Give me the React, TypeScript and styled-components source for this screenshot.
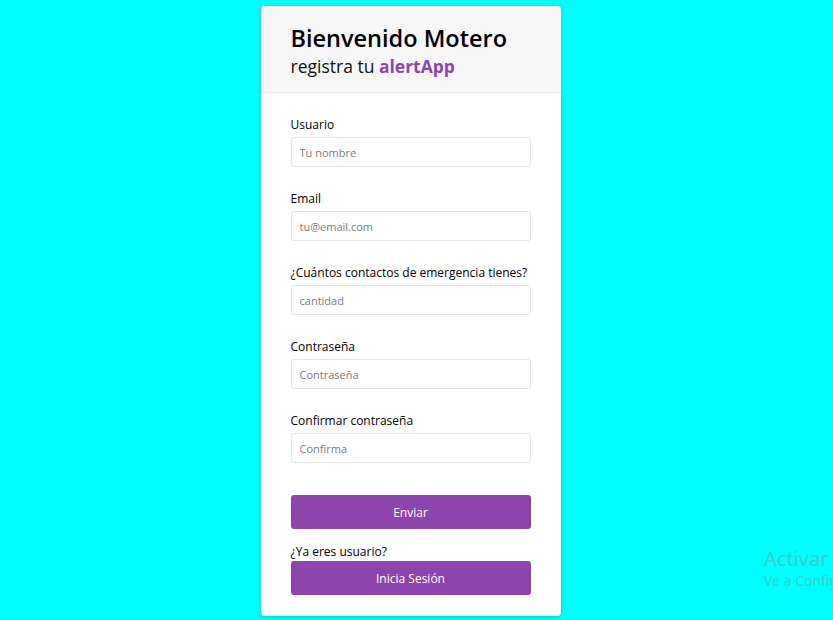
import styled, { createGlobalStyle } from 'styled-components';

const GlobalStyle = createGlobalStyle`
  html, body {
    margin: 0;
    padding: 0;
    background: #00ffff;
    font-family: "Open Sans", "Liberation Sans", sans-serif;
  }
  * { box-sizing: border-box; }
`;

const Page = styled.div`
  position: relative;
  width: 833px;
  height: 620px;
  overflow: hidden;
  display: flex;
  justify-content: center;
  padding-top: 6px;
`;

const Card = styled.div`
  width: 300px;
  height: 610px;
  margin-left: -12px;
  background: #fff;
  border-radius: 4px;
  box-shadow: 0 1px 4px rgba(0, 0, 0, 0.2);
  overflow: hidden;
  display: flex;
  flex-direction: column;
`;

const Header = styled.header`
  height: 87px;
  background: #f7f7f7;
  border-bottom: 1px solid #e8e8e8;
  padding: 15px 30px 0;
`;

const Title = styled.h1`
  margin: 0;
  font-size: 23.5px;
  line-height: 34px;
  font-weight: 600;
  color: #000;
`;

const Subtitle = styled.p`
  margin: 0;
  font-size: 17.5px;
  line-height: 22px;
  color: #111;
`;

const Brand = styled.span`
  color: #8e44ad;
  font-weight: 700;
`;

const Form = styled.form`
  padding: 23px 30px 0;
  display: flex;
  flex-direction: column;
`;

const Field = styled.div`
  display: flex;
  flex-direction: column;
  margin-bottom: 23px;
`;

const Label = styled.label`
  font-size: 12px;
  line-height: 18px;
  color: #000;
  margin-bottom: 3px;
`;

const Input = styled.input`
  height: 30px;
  width: 240px;
  border: 1px solid #e6e6e6;
  border-radius: 3px;
  padding: 0 8px;
  font-family: inherit;
  font-size: 11px;
  color: #333;
  outline: none;
  &::placeholder { color: #7a7a7a; }
`;

const Button = styled.button<{ $top?: number }>`
  margin-top: ${p => p.$top ?? 0}px;
  width: 240px;
  height: 34px;
  border: none;
  border-radius: 3px;
  background: #8e44ad;
  color: #fff;
  font-family: inherit;
  font-size: 12px;
`;

const Hint = styled.p`
  margin: 14px 0 0;
  font-size: 12px;
  line-height: 18px;
  color: #000;
`;

const Watermark = styled.div`
  position: absolute;
  left: 764px;
  top: 546px;
  color: rgba(120, 150, 150, 0.5);
  font-family: "Noto Sans", "Liberation Sans", sans-serif;
  white-space: nowrap;
`;

const WmTitle = styled.div`
  font-size: 20px;
  line-height: 26px;
`;

const WmSub = styled.div`
  font-size: 14px;
  line-height: 18px;
`;

const fields = [
  { label: 'Usuario', ph: 'Tu nombre', type: 'text' },
  { label: 'Email', ph: 'tu@email.com', type: 'email' },
  { label: '¿Cuántos contactos de emergencia tienes?', ph: 'cantidad', type: 'text' },
  { label: 'Contraseña', ph: 'Contraseña', type: 'password' },
  { label: 'Confirmar contraseña', ph: 'Confirma', type: 'password' },
];

export default function App() {
  return (
    <Page>
      <GlobalStyle />
      <Card>
        <Header>
          <Title>Bienvenido Motero</Title>
          <Subtitle>
            registra tu <Brand>alertApp</Brand>
          </Subtitle>
        </Header>
        <Form onSubmit={e => e.preventDefault()}>
          {fields.map(f => (
            <Field key={f.label}>
              <Label>{f.label}</Label>
              <Input type={f.type} placeholder={f.ph} />
            </Field>
          ))}
          <Button type="submit" $top={9}>Enviar</Button>
          <Hint>¿Ya eres usuario?</Hint>
          <Button type="button">Inicia Sesión</Button>
        </Form>
      </Card>
      <Watermark>
        <WmTitle>Activar Windows</WmTitle>
        <WmSub>Ve a Configuración para activar Windows.</WmSub>
      </Watermark>
    </Page>
  );
}
